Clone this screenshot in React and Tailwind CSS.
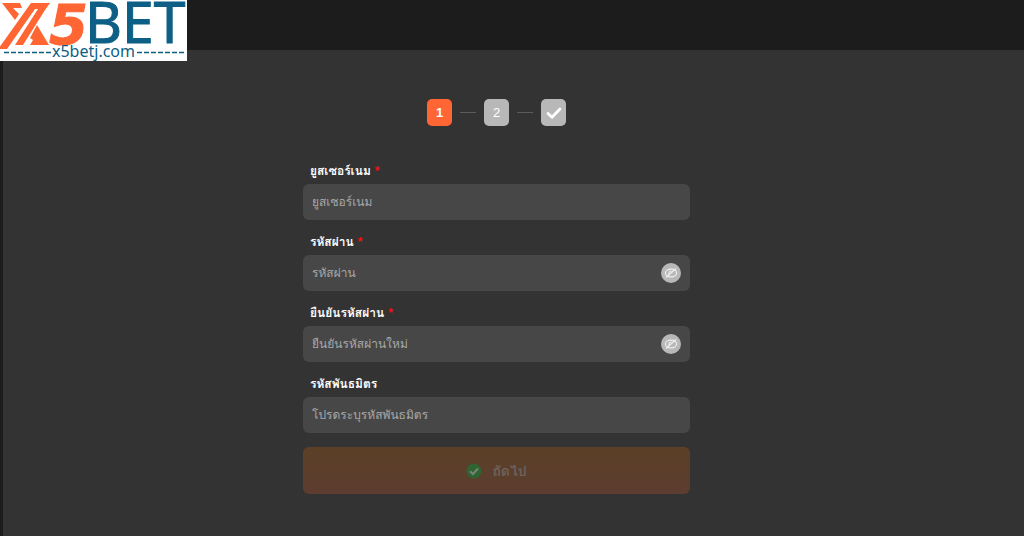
import { useState } from "react";

function Logo() {
  return (
    <svg viewBox="0 0 187 61" className="h-[61px] w-[187px]" role="img" aria-label="X5BET">
      <rect width="187" height="61" fill="#fff" />
      <g fill="#ff6633">
        <path d="M2 3H20L22 8H13L19 14L15 20Z" />
        <path d="M31 3H50L45 10L23 45H15L38 9H35L7 49H-1V48Z" />
        <path d="M37 25L49 45H30L33 40L30 38Z" />
      </g>
      <text x="49" y="44" fontSize="56" fontWeight="700" fontStyle="italic" fontFamily="DejaVu Sans, sans-serif" fill="#ff6633" stroke="#ff6633">5</text>
      <text x="85" y="43" fontSize="57" fontFamily="Noto Sans, sans-serif" fill="#0d5f85" stroke="#0d5f85">BET</text>
      <text x="52" y="57" fontSize="16" fontFamily="Noto Sans, sans-serif" fill="#0d5f85">x5betj.com</text>
      <path d="M4 52.5H51M137 52.5H184" stroke="#0d5f85" strokeWidth="1.3" strokeDasharray="5 2" />
    </svg>
  );
}

function Step({ active, children }) {
  return (
    <li
      className={`flex h-[27px] w-[25px] items-center justify-center rounded-[5px] text-[13px] text-white ${active ? "bg-[#ff6633] font-bold" : "bg-[#b8b8b8]"}`}
      aria-current={active ? "step" : undefined}
    >
      {children}
    </li>
  );
}

function HiddenEye() {
  return (
    <svg viewBox="0 0 20 20" className="size-5" aria-hidden="true">
      <circle cx="10" cy="10" r="10" fill="#b8b8b8" />
      <g fill="none" stroke="#eeeeee" strokeWidth="1.2">
        <ellipse cx="10" cy="10" rx="5.6" ry="3.9" />
        <path d="M8 11.5C7.4 9.5 8.5 8 10.5 8" />
        <path d="M5 14.5L15 5.5" />
      </g>
    </svg>
  );
}

function Field({ id, label, placeholder, required, secret }) {
  const [shown, setShown] = useState(false);
  return (
    <div className="flex flex-col gap-[3px]">
      <label htmlFor={id} className="flex gap-1 px-[7px] text-xs leading-5 font-bold text-white">
        {label}
        {required && <span className="text-[#f01010]">*</span>}
      </label>
      <div className="flex h-9 items-center rounded-md bg-[#474747] px-[9px]">
        <input
          id={id}
          type={secret && !shown ? "password" : "text"}
          placeholder={placeholder}
          required={required}
          className="h-full min-w-0 flex-1 bg-transparent text-xs text-white outline-none placeholder:text-[#a8a8a8]"
        />
        {secret && (
          <button type="button" aria-label={placeholder} aria-pressed={shown} onClick={() => setShown(!shown)}>
            <HiddenEye />
          </button>
        )}
      </div>
    </div>
  );
}

export default function App() {
  return (
    <div className="flex min-h-screen flex-col bg-[#1c1c1c] font-['Liberation_Sans','Loma','Noto_Sans_Thai_Looped','Noto_Sans_Thai',sans-serif]">
      <header className="relative h-[50px]">
        <a href="#home" className="absolute top-0 left-0">
          <Logo />
        </a>
      </header>
      <main className="ml-[3px] flex flex-1 flex-col items-center bg-[#333333] pt-[49px] pr-[34px] pb-10">
        <ol className="flex items-center gap-2">
          <Step active>1</Step>
          <li className="h-px w-4 bg-[#5c5c5c]" aria-hidden="true" />
          <Step>2</Step>
          <li className="h-px w-4 bg-[#5c5c5c]" aria-hidden="true" />
          <Step>
            <svg viewBox="0 0 16 16" className="size-4" aria-hidden="true">
              <path d="M2 8.5L6 12.2L14 4" fill="none" stroke="#fff" strokeWidth="2.8" strokeLinecap="round" strokeLinejoin="round" />
            </svg>
          </Step>
        </ol>
        <form className="mt-[35px] flex w-full max-w-[387px] flex-col gap-3" onSubmit={(e) => e.preventDefault()}>
          <Field id="username" label="ยูสเซอร์เนม" placeholder="ยูสเซอร์เนม" required />
          <Field id="password" label="รหัสผ่าน" placeholder="รหัสผ่าน" required secret />
          <Field id="confirm" label="ยืนยันรหัสผ่าน" placeholder="ยืนยันรหัสผ่านใหม่" required secret />
          <Field id="partner" label="รหัสพันธมิตร" placeholder="โปรดระบุรหัสพันธมิตร" />
          <button
            type="submit"
            disabled
            className="mt-0.5 flex h-[47px] items-center justify-center gap-2.5 rounded-md bg-linear-to-b from-[#5c4027] to-[#5c3d30] text-sm font-bold text-[#6c625c]"
          >
            <svg viewBox="0 0 16 16" className="size-4" aria-hidden="true">
              <circle cx="8" cy="8" r="7.5" fill="#2e6430" />
              <path d="M4 8.2L7 11L12 5.5" fill="none" stroke="#77827a" strokeWidth="2" />
            </svg>
            ถัดไป
          </button>
        </form>
      </main>
    </div>
  );
}
